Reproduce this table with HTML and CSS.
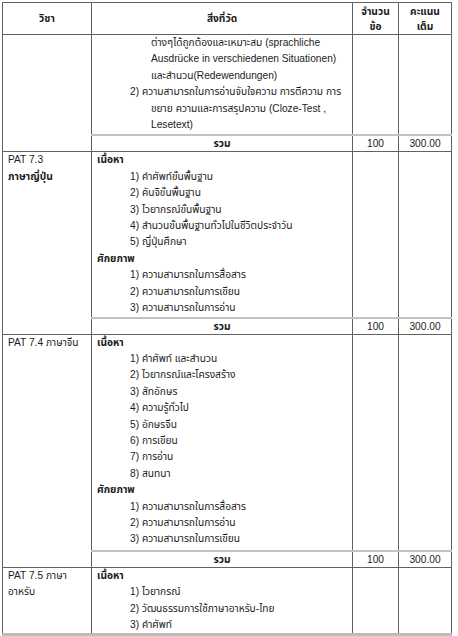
FILE: index.html
```html
<!DOCTYPE html>
<html lang="th">
<head>
<meta charset="utf-8">
<title>PAT 7</title>
<link rel="stylesheet" href="styles.css">
</head>
<body>
<table class="spec">
  <colgroup>
    <col class="c1"><col class="c2"><col class="c3"><col class="c4">
  </colgroup>
  <thead>
    <tr class="head">
      <th>วิชา</th>
      <th>สิ่งที่วัด</th>
      <th>จำนวน<br>ข้อ</th>
      <th>คะแนน<br>เต็ม</th>
    </tr>
  </thead>
  <tbody>
    <tr class="body r0">
      <td class="subj" rowspan="2"></td>
      <td class="meas">
        <div class="item cont">ต่างๆได้ถูกต้องและเหมาะสม (sprachliche<br>Ausdrücke in verschiedenen Situationen)<br>และสำนวน(Redewendungen)</div>
        <div class="item">2) ความสามารถในการอ่านจับใจความ การตีความ การ<br>ขยาย ความและการสรุปความ (Cloze-Test ,<br>Lesetext)</div>
      </td>
      <td></td>
      <td></td>
    </tr>
    <tr class="total">
      <td class="lbl">รวม</td>
      <td class="num">100</td>
      <td class="num">300.00</td>
    </tr>

    <tr class="body r1">
      <td class="subj" rowspan="2">PAT 7.3<br><b>ภาษาญี่ปุ่น</b></td>
      <td class="meas">
        <div class="sec">เนื้อหา</div>
        <div class="item">1) คำศัพท์ขั้นพื้นฐาน</div>
        <div class="item">2) คันจิขั้นพื้นฐาน</div>
        <div class="item">3) ไวยากรณ์ขั้นพื้นฐาน</div>
        <div class="item">4) สำนวนขั้นพื้นฐานทั่วไปในชีวิตประจำวัน</div>
        <div class="item">5) ญี่ปุ่นศึกษา</div>
        <div class="sec">ศักยภาพ</div>
        <div class="item">1) ความสามารถในการสื่อสาร</div>
        <div class="item">2) ความสามารถในการเขียน</div>
        <div class="item">3) ความสามารถในการอ่าน</div>
      </td>
      <td></td>
      <td></td>
    </tr>
    <tr class="total">
      <td class="lbl">รวม</td>
      <td class="num">100</td>
      <td class="num">300.00</td>
    </tr>

    <tr class="body r2">
      <td class="subj" rowspan="2">PAT 7.4 ภาษาจีน</td>
      <td class="meas">
        <div class="sec">เนื้อหา</div>
        <div class="item">1) คำศัพท์ และสำนวน</div>
        <div class="item">2) ไวยากรณ์และโครงสร้าง</div>
        <div class="item">3) สัทอักษร</div>
        <div class="item">4) ความรู้ทั่วไป</div>
        <div class="item">5) อักษรจีน</div>
        <div class="item">6) การเขียน</div>
        <div class="item">7) การอ่าน</div>
        <div class="item">8) สนทนา</div>
        <div class="sec">ศักยภาพ</div>
        <div class="item">1) ความสามารถในการสื่อสาร</div>
        <div class="item">2) ความสามารถในการอ่าน</div>
        <div class="item">3) ความสามารถในการเขียน</div>
      </td>
      <td></td>
      <td></td>
    </tr>
    <tr class="total">
      <td class="lbl">รวม</td>
      <td class="num">100</td>
      <td class="num">300.00</td>
    </tr>

    <tr class="body r3 last">
      <td class="subj">PAT 7.5 ภาษา<br>อาหรับ</td>
      <td class="meas">
        <div class="sec">เนื้อหา</div>
        <div class="item">1) ไวยากรณ์</div>
        <div class="item">2) วัฒนธรรมการใช้ภาษาอาหรับ-ไทย</div>
        <div class="item">3) คำศัพท์</div>
      </td>
      <td></td>
      <td></td>
    </tr>
  </tbody>
</table>
</body>
</html>
```

FILE: styles.css
```css
html, body {
  margin: 0;
  padding: 0;
  background: #ffffff;
}

body {
  padding: 2px 0 0 2px;
  font-family: "Liberation Sans", "Noto Sans Thai", "DejaVu Sans", sans-serif;
  font-size: 10.2px;
  line-height: 16.4px;
  color: #1c1c1c;
}

.spec {
  border-collapse: collapse;
  table-layout: fixed;
  width: 449px;
}

.c1 { width: 89px; }
.c2 { width: 261px; }
.c3 { width: 46px; }
.c4 { width: 53px; }

.spec th,
.spec td {
  border: 1px solid #626262;
  padding: 0;
  vertical-align: top;
}

.head th {
  height: 31px;
  vertical-align: middle;
  text-align: center;
  font-weight: bold;
  line-height: 15px;
}

.subj {
  padding: 0 0 0 5px !important;
}

.meas {
  padding: 0 0 0 5px !important;
}

.sec {
  font-weight: bold;
}

.item {
  padding-left: 54px;
  text-indent: -21px;
}

.item.cont {
  text-indent: 0;
}

.r0 .meas { padding-bottom: 1px !important; }
.r2 .meas { padding-bottom: 2px !important; }

.total td {
  border-top: 2px solid #c2c2c2;
  height: 15px;
  line-height: 15px;
  text-align: center;
  vertical-align: middle;
}

.total .lbl {
  font-weight: bold;
}

.last td {
  border-bottom: 3px solid #bdbdbd;
}
```
